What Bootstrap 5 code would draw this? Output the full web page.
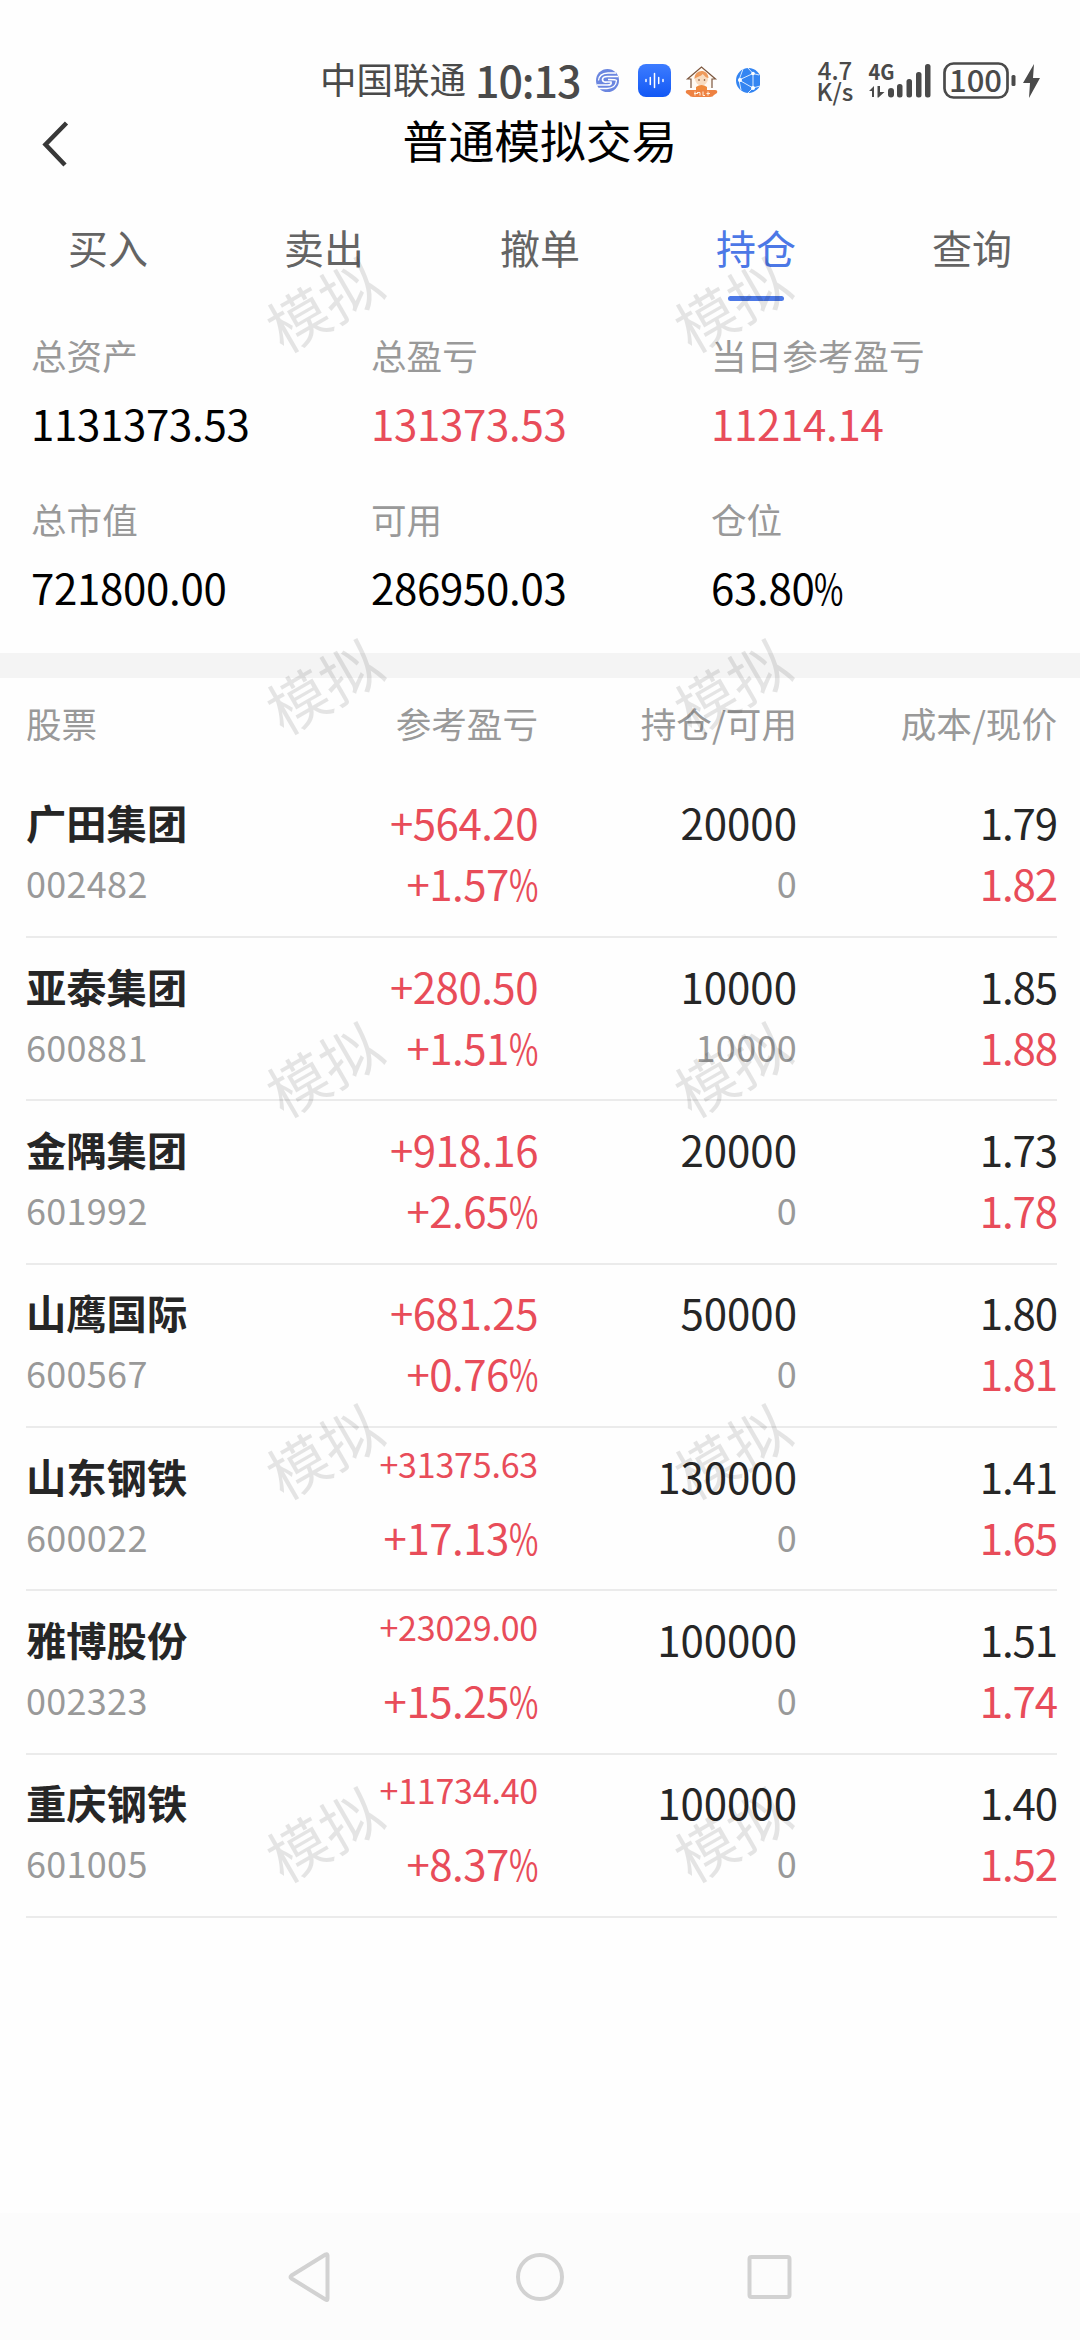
<!DOCTYPE html>
<html lang="zh-CN">
<head>
<meta charset="utf-8">
<meta name="viewport" content="width=device-width, initial-scale=1">
<title>普通模拟交易</title>
<link href="https://cdn.jsdelivr.net/npm/bootstrap@5.3.0/dist/css/bootstrap.min.css" rel="stylesheet">
<style>
  body { font-family: "Noto Sans CJK SC", sans-serif; background: #fefefe; color: #000; }
  .screen { width: 1080px; height: 2340px; }
  .status { height: 104px; padding: 56px 40px 0 320px; color: #4a4a4a; }
  .status > * { flex: none; }
  .carrier { font-size: 36.5px; line-height: 48px; width: 151px; margin-top: -1px; }
  .clock { font-size: 43px; line-height: 48px; font-weight: 500; width: 125px; letter-spacing: -1.1px; margin-top: -1px; }
  .rate { font-size: 24px; line-height: 21px; width: 48px; font-weight: 500; margin: 3px 0 0 51px; }
  .appbar { height: 78px; }
  .appbar .back { left: 37px; top: 14px; }
  .appbar h1 { font-size: 45.8px; line-height: 70px; }
  .tabs { height: 134px; }
  .tabs .nav-link { width: 216px; color: #646464; font-size: 40px; line-height: 60px; padding: 35px 0 0; }
  .tabs .nav-link.active { color: #4c78e6; }
  .tabs .active::after { content: ""; display: block; width: 56px; height: 5px; border-radius: 3px; background: #4c78e6; margin: 19px auto 0; }
  .summary { height: 337px; padding: 14px 29px 0 31px; }
  .summary .cell { width: 340px; height: 163.5px; }
  .lbl { color: #999; font-size: 35.6px; line-height: 50px; }
  .amount { font-size: 42px; line-height: 60px; margin-top: 13px; letter-spacing: -.3px; }
  .pct { display: inline-block; transform: scaleX(.76); transform-origin: left; margin-right: -9px; }
  .up { color: #e84c59; }
  .band { height: 25px; background: #f4f4f4; }
  .holdings { padding: 0 23px 0 26px; }
  .hrow { display: grid; grid-template-columns: 252px 260px 259px 260px; }
  .hrow.head { height: 96.7px; padding-top: 20px; }
  .hrow.item { height: 163.35px; border-bottom: 2px solid #ebebeb; padding-top: 16.5px; }
  .hrow > :not(:first-child) { text-align: right; }
  .l1, .l2 { height: 61px; line-height: 61px; font-size: 42px; color: #262626; white-space: nowrap; }
  .name { font-size: 40.3px; font-weight: 600; }
  .sub { font-size: 36px; color: #999; letter-spacing: .3px; }
  .l1.up, .l2.up { color: #e84c59; letter-spacing: -.5px; }
  .hrow.item > :last-child > div { letter-spacing: -1.1px; }
  .l1.tight { font-size: 34px; line-height: 38px; letter-spacing: -.2px; }
  .wm { position: absolute; font-size: 60px; line-height: 60px; width: 120px; color: rgba(0,0,0,.1); transform: translate(-50%, -50%) rotate(-30deg); white-space: nowrap; pointer-events: none; }
  .wm.wl { left: 323px; }
  .wm.wr { left: 731px; }
  .sysnav { height: 127px; background: #fcfcfc; padding: 0 284px; }
</style>
</head>
<body>
<div class="screen position-relative d-flex flex-column overflow-hidden">
  <header class="status d-flex">
    <div class="carrier">中国联通</div>
    <div class="clock ps-1">10:13</div>
    <svg width="130" height="48" viewBox="0 0 130 48">
      <g transform="translate(0,13)">
        <circle cx="11.500" cy="11.500" r="11.500" fill="#6b86e0"/>
        <path d="M22 7.500H11.500Q6.500 7.500 6.500 10.500T11 13h4Q16 16 11.500 16H1" fill="none" stroke="#fff" stroke-width="1.700"/>
        <path d="M20 4H12Q3 4.500 2.500 11.500M3 19.500h8Q20 19 20.500 11.500Q20 10.500 12 10.500" fill="none" stroke="#fff" stroke-width="1.300"/>
      </g>
      <defs><linearGradient id="blue" x2="0" y2="1"><stop stop-color="#3d7cff"/><stop offset="1" stop-color="#1258f5"/></linearGradient></defs>
      <rect x="42" y="8" width="33" height="33" rx="8" fill="url(#blue)"/>
      <path d="M50 23.500v2M54.300 21.500v7M58.500 17.500v14M62.700 21.500v6M67 23.500v2" stroke="#fff" stroke-width="1.500" stroke-linecap="round"/>
      <g transform="translate(90,10)">
        <path d="M5 22V13H1.500L15.500 1l14 12H26v9" fill="#fffaf3" stroke="#7c563e" stroke-width="1.200"/>
        <circle cx="15.500" cy="13" r="6.500" fill="#f8dcc0"/>
        <path d="M8.500 13C8 3 22 2 22.500 12c-3 0-4-3-6-4-2 3-5 2-8 5z" fill="#ee9a5c"/>
        <circle cx="13" cy="14" r=".8" fill="#6a3a20"/><circle cx="18.500" cy="14" r=".8" fill="#6a3a20"/>
        <path d="M10 24v-3q5.500-4 11 0v3z" fill="#f08a3c"/>
        <path d="M2 24h27q3 0 2 3l-3 2q-1 2-4 2H7q-3 0-4-2l-3-2q-1-3 2-3z" fill="#ee8242"/>
        <path d="M9 25.500v4M11 26.500h3v3M17 25.500v4h2M22 25.500v4M8 27.500h4M20.500 27.500h3.500" stroke="#fff0e0" stroke-width="1" fill="none"/>
      </g>
    </svg>
    <svg width="34" height="48" viewBox="-4 0 34 48">
      <circle cx="18.500" cy="24.500" r="12.500" fill="#3485f2"/>
      <path d="M9 24 23 17.500M9 24 23 32M23 32V17.500L18 12M23 32 18 37M9 24 13 13M9 24 11 34M23 32 30 30M23 17.500 29 19" stroke="#d8e9ff" stroke-width="1" fill="none"/>
      <circle cx="10" cy="24" r="2" fill="#fff"/><circle cx="23" cy="17.500" r="1.800" fill="#fff"/><circle cx="23" cy="32" r="2" fill="#fff"/>
    </svg>
    <div class="rate text-center"><div>4.7</div><div>K/s</div></div>
    <svg class="ms-auto" width="172" height="48" viewBox="867 56 172 48" fill="#4a4a4a">
      <text x="867.500" y="80" font-family="Noto Sans CJK SC" font-size="21.500" font-weight="700" textLength="26" lengthAdjust="spacingAndGlyphs">4G</text>
      <path d="M873 97V86l-5 5h3v6zM876 97V86M876.500 86h2.500v6h4.500l-6 5.500h-1z"/>
      <rect x="887" y="88" width="6" height="9.500" rx="3"/><rect x="896" y="84" width="5.500" height="13.500" rx="2.500"/><rect x="905.500" y="79" width="5.500" height="18.500" rx="2.500"/><rect x="915" y="72" width="5.500" height="25.500" rx="2.500"/><rect x="924" y="64" width="5.500" height="33.500" rx="2.500"/>
      <rect x="943.500" y="63.500" width="63" height="34" rx="9" fill="none" stroke="#4a4a4a" stroke-width="2.700"/>
      <text x="948" y="91.500" font-family="Noto Sans CJK SC" font-size="30" font-weight="500" textLength="53" lengthAdjust="spacingAndGlyphs">100</text>
      <rect x="1010.500" y="75" width="4" height="11" rx="1.500"/>
      <path d="M1033 64 1022 83h7l-1 15 11-20h-7z"/>
    </svg>
  </header>

  <div class="appbar position-relative text-center">
    <svg class="back position-absolute" width="36" height="52" viewBox="0 0 36 52"><path d="M29.500 5 8.500 26.500 28 47" fill="none" stroke="#383838" stroke-width="4.500"/></svg>
    <h1 class="m-0 fw-normal">普通模拟交易</h1>
  </div>

  <nav class="tabs nav flex-nowrap text-center">
    <a class="nav-link">买入</a><a class="nav-link">卖出</a><a class="nav-link">撤单</a><a class="nav-link active">持仓</a><a class="nav-link">查询</a>
  </nav>

  <section class="summary d-flex flex-wrap align-content-start">
    <div class="cell"><div class="lbl">总资产</div><div class="amount">1131373.53</div></div>
    <div class="cell"><div class="lbl">总盈亏</div><div class="amount up">131373.53</div></div>
    <div class="cell"><div class="lbl">当日参考盈亏</div><div class="amount up">11214.14</div></div>
    <div class="cell"><div class="lbl">总市值</div><div class="amount">721800.00</div></div>
    <div class="cell"><div class="lbl">可用</div><div class="amount">286950.03</div></div>
    <div class="cell"><div class="lbl">仓位</div><div class="amount">63.80<span class="pct">%</span></div></div>
  </section>

  <div class="band"></div>

  <section class="holdings flex-grow-1">
    <div class="hrow head lbl"><div>股票</div><div>参考盈亏</div><div>持仓/可用</div><div>成本/现价</div></div>
    <div class="hrow item"><div><div class="l1 name">广田集团</div><div class="l2 sub">002482</div></div><div><div class="l1 up">+564.20</div><div class="l2 up">+1.57<span class="pct">%</span></div></div><div><div class="l1">20000</div><div class="l2 sub">0</div></div><div><div class="l1">1.79</div><div class="l2 up">1.82</div></div></div>
    <div class="hrow item"><div><div class="l1 name">亚泰集团</div><div class="l2 sub">600881</div></div><div><div class="l1 up">+280.50</div><div class="l2 up">+1.51<span class="pct">%</span></div></div><div><div class="l1">10000</div><div class="l2 sub">10000</div></div><div><div class="l1">1.85</div><div class="l2 up">1.88</div></div></div>
    <div class="hrow item"><div><div class="l1 name">金隅集团</div><div class="l2 sub">601992</div></div><div><div class="l1 up">+918.16</div><div class="l2 up">+2.65<span class="pct">%</span></div></div><div><div class="l1">20000</div><div class="l2 sub">0</div></div><div><div class="l1">1.73</div><div class="l2 up">1.78</div></div></div>
    <div class="hrow item"><div><div class="l1 name">山鹰国际</div><div class="l2 sub">600567</div></div><div><div class="l1 up">+681.25</div><div class="l2 up">+0.76<span class="pct">%</span></div></div><div><div class="l1">50000</div><div class="l2 sub">0</div></div><div><div class="l1">1.80</div><div class="l2 up">1.81</div></div></div>
    <div class="hrow item"><div><div class="l1 name">山东钢铁</div><div class="l2 sub">600022</div></div><div><div class="l1 up tight">+31375.63</div><div class="l2 up">+17.13<span class="pct">%</span></div></div><div><div class="l1">130000</div><div class="l2 sub">0</div></div><div><div class="l1">1.41</div><div class="l2 up">1.65</div></div></div>
    <div class="hrow item"><div><div class="l1 name">雅博股份</div><div class="l2 sub">002323</div></div><div><div class="l1 up tight">+23029.00</div><div class="l2 up">+15.25<span class="pct">%</span></div></div><div><div class="l1">100000</div><div class="l2 sub">0</div></div><div><div class="l1">1.51</div><div class="l2 up">1.74</div></div></div>
    <div class="hrow item"><div><div class="l1 name">重庆钢铁</div><div class="l2 sub">601005</div></div><div><div class="l1 up tight">+11734.40</div><div class="l2 up">+8.37<span class="pct">%</span></div></div><div><div class="l1">100000</div><div class="l2 sub">0</div></div><div><div class="l1">1.40</div><div class="l2 up">1.52</div></div></div>
  </section>

  <footer class="sysnav d-flex justify-content-between align-items-center">
    <svg width="50" height="56" viewBox="0 0 50 56"><path d="M43.500 6.500V49.500Q43.500 52 41.500 50.500L7.500 29.500Q5.500 28 7.500 26.500L41.500 5.500Q43.500 4.500 43.500 6.500z" fill="none" stroke="#d2d2d2" stroke-width="4" stroke-linejoin="round"/></svg>
    <svg width="56" height="56" viewBox="0 0 56 56"><circle cx="28" cy="28" r="22" fill="none" stroke="#d2d2d2" stroke-width="4"/></svg>
    <svg width="50" height="56" viewBox="0 0 50 56"><rect x="3.500" y="8" width="40" height="40" rx="2" fill="none" stroke="#d2d2d2" stroke-width="4"/></svg>
  </footer>

  <div class="wm wl" style="top:302px">模拟</div><div class="wm wr" style="top:302px">模拟</div>
  <div class="wm wl" style="top:684px">模拟</div><div class="wm wr" style="top:684px">模拟</div>
  <div class="wm wl" style="top:1067px">模拟</div><div class="wm wr" style="top:1067px">模拟</div>
  <div class="wm wl" style="top:1449px">模拟</div><div class="wm wr" style="top:1449px">模拟</div>
  <div class="wm wl" style="top:1832px">模拟</div><div class="wm wr" style="top:1832px">模拟</div>
</div>
<script src="https://cdn.jsdelivr.net/npm/bootstrap@5.3.0/dist/js/bootstrap.bundle.min.js"></script>
</body>
</html>
